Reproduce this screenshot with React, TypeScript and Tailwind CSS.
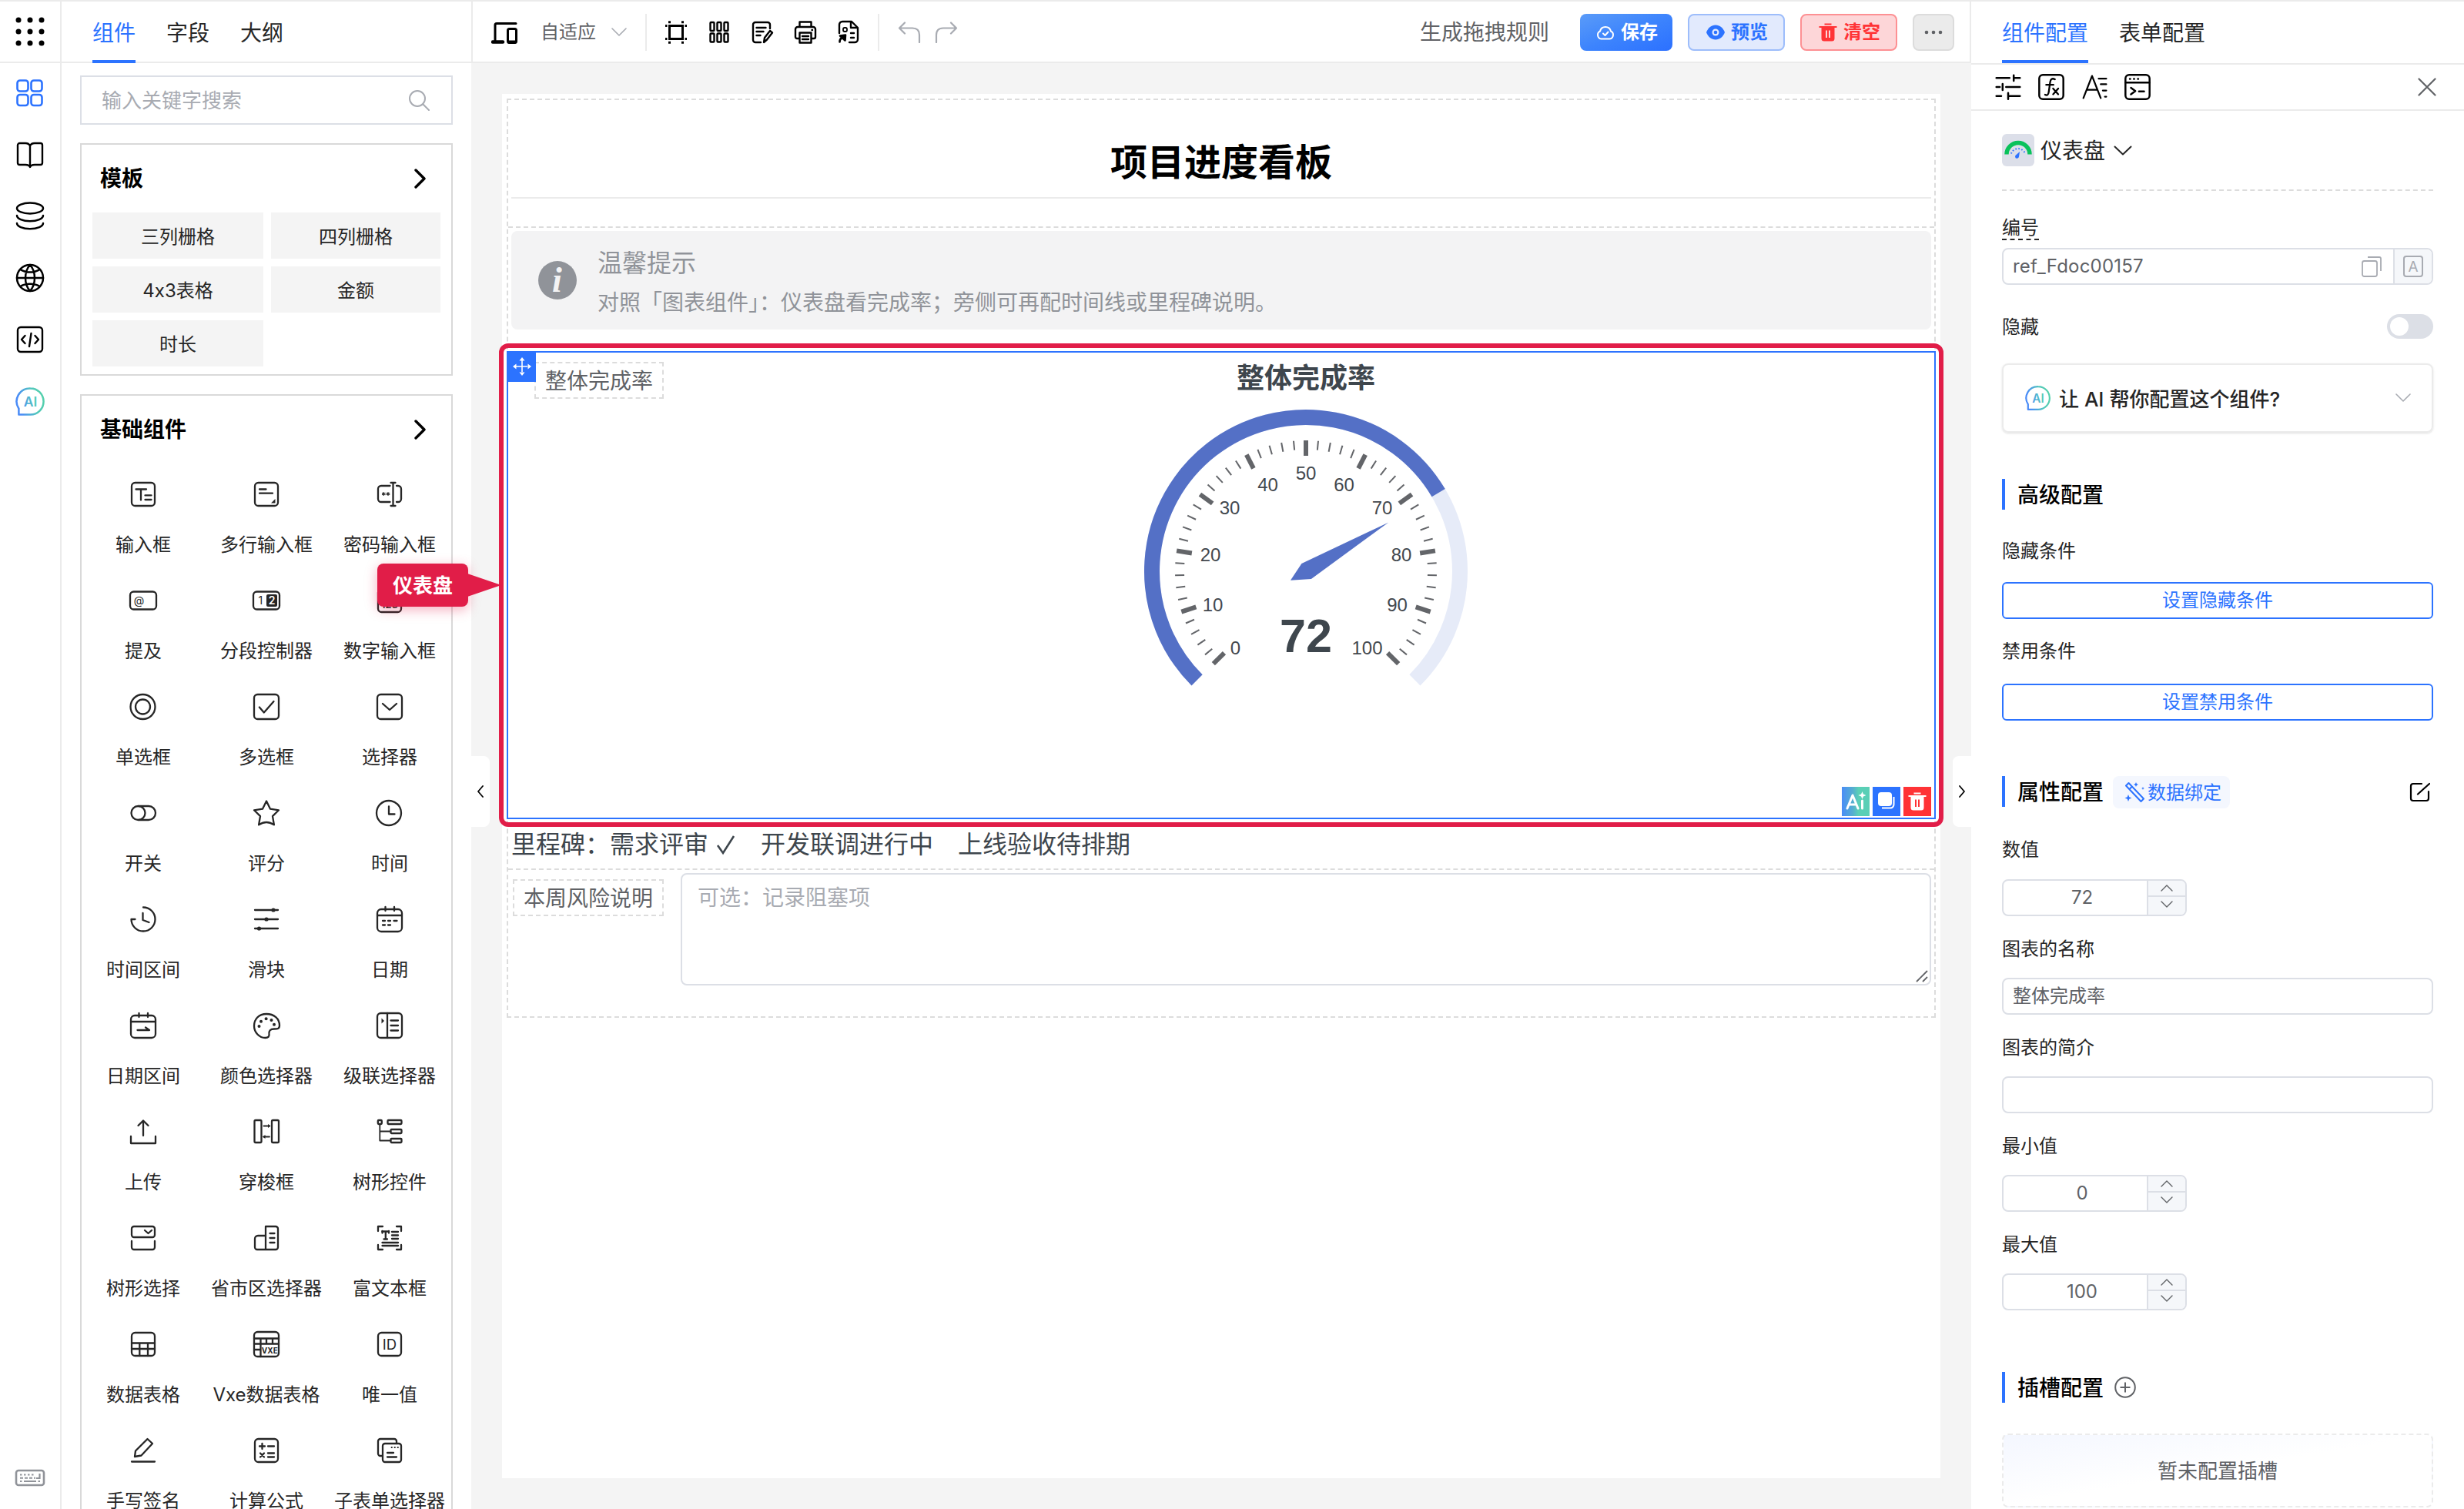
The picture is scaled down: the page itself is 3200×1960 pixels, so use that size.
import type { ReactNode } from 'react';
import clsx from 'clsx';

type Glyph = { label: string; icon: ReactNode };

const box = <rect x="5" y="5" width="30" height="30" rx="4.5" />;
const wideBox = <rect x="4" y="4" width="32" height="32" rx="4.5" />;
const calendar = (
  <>
    <rect x="4" y="7" width="32" height="29" rx="5" />
    <path d="M4 15h32M14.5 4v5M26 4v5" />
  </>
);

const basics: Glyph[] = [
  {
    label: '输入框',
    icon: (
      <>
        {box}
        <path d="M10.5 13.5h13.5M17 13.5v14M22.5 21.4h8M22.5 27h8" />
      </>
    ),
  },
  {
    label: '多行输入框',
    icon: (
      <>
        {box}
        <path d="M11 13.5h8.5M11 18.7h17" />
        <path d="M31.5 26v5.5H26z" fill="currentColor" stroke="none" />
      </>
    ),
  },
  {
    label: '密码输入框',
    icon: (
      <>
        <path d="M20.5 9H9a4 4 0 0 0-4 4v13a4 4 0 0 0 4 4h11.5M29 9h2a4 4 0 0 1 4 4v13a4 4 0 0 1-4 4h-2M24.5 5v30M21.5 5h6M21.5 35h6" />
        <path d="M12.3 17.5v4M10.5 18.5l3.6 2M14.1 18.5l-3.6 2M18 17.5v4M16.2 18.5l3.6 2M19.8 18.5l-3.6 2" strokeWidth="1.2" />
      </>
    ),
  },
  {
    label: '提及',
    icon: (
      <>
        <rect x="3" y="8.5" width="34" height="23" rx="4.5" />
        <text x="14.5" y="24.5" fontSize="14" textAnchor="middle" fill="currentColor" stroke="none">@</text>
      </>
    ),
  },
  {
    label: '分段控制器',
    icon: (
      <>
        <rect x="3" y="8.5" width="34" height="23" rx="4.5" />
        <rect x="20" y="12" width="14" height="16" rx="2" fill="currentColor" stroke="none" />
        <text x="12.3" y="25.3" fontSize="14" textAnchor="middle" fill="currentColor" stroke="none">1</text>
        <text x="27" y="25" fontSize="14" fontWeight="600" textAnchor="middle" fill="#fff" stroke="none">2</text>
      </>
    ),
  },
  {
    label: '数字输入框',
    icon: (
      <>
        {box}
        <text x="20" y="30" fontSize="13" fontWeight="600" textAnchor="middle" fill="currentColor" stroke="none">123</text>
      </>
    ),
  },
  {
    label: '单选框',
    icon: (
      <>
        <circle cx="19.5" cy="20" r="16" />
        <circle cx="19.5" cy="20" r="9.5" />
      </>
    ),
  },
  {
    label: '多选框',
    icon: (
      <>
        {wideBox}
        <path d="M10.8 20.5l6 7L29.5 13" />
      </>
    ),
  },
  {
    label: '选择器',
    icon: (
      <>
        {wideBox}
        <path d="M11 16l9 8 9-8" />
      </>
    ),
  },
  {
    label: '开关',
    icon: (
      <>
        <path d="M14 11h13a9 9 0 0 1 0 18H14" />
        <circle cx="13.5" cy="20" r="9" />
      </>
    ),
  },
  {
    label: '评分',
    icon: <path d="M20 4.5l5 10.2 11 1.6-8 7.8 1.9 11.2c-3-1.8-6-3.3-9.9-3.3s-6.9 1.5-9.9 3.3L12 24.1l-8-7.8 11-1.6z" />,
  },
  {
    label: '时间',
    icon: (
      <>
        <circle cx="19" cy="20" r="16" />
        <path d="M19 11.5v10h7.500" />
      </>
    ),
  },
  { label: '时间区间', icon: <path d="M20 4.5A15.5 15.5 0 1 1 4.5 20h5M19.5 12v9l8 3" /> },
  {
    label: '滑块',
    icon: (
      <>
        <path d="M5 8h30M5 20h30M5 32h30" />
        <g fill="currentColor" stroke="none">
          <circle cx="29" cy="8" r="2.6" />
          <circle cx="20" cy="20" r="2.6" />
          <circle cx="10.5" cy="32" r="2.6" />
        </g>
      </>
    ),
  },
  {
    label: '日期',
    icon: (
      <>
        {calendar}
        <path d="M11 22h3M18 22h3M25.5 22h4M11 27.5h3M18 27.5h3" />
      </>
    ),
  },
  {
    label: '日期区间',
    icon: (
      <>
        {calendar}
        <path d="M12.5 26h15.5l-5-3.5" />
      </>
    ),
  },
  {
    label: '颜色选择器',
    icon: (
      <>
        <path d="M37 20C37 11 30 5 20 5S4 12 4 20.5 11 36 18.5 36c4 0 5.5-2 5-5-.5-4 1.5-6.5 6.5-6.5 4 0 7 0 7-4.5z" />
        <g fill="currentColor" stroke="none">
          <circle cx="10.5" cy="21" r="2" />
          <circle cx="13" cy="14.7" r="2" />
          <circle cx="19.6" cy="11.3" r="2" />
          <circle cx="26.5" cy="13" r="2" />
          <circle cx="30" cy="18.8" r="2" />
        </g>
      </>
    ),
  },
  {
    label: '级联选择器',
    icon: (
      <>
        {wideBox}
        <path d="M17 4v32M21.5 13.5H31M21.5 20H31M21.5 26.5H31" />
        <path d="M9.5 10.5l3.5 3.5-3.5 3.5z" fill="currentColor" stroke="none" />
      </>
    ),
  },
  { label: '上传', icon: <path d="M4 26v9h32v-9M20 25V6M13.5 12L20 5.500l6.500 6.500" /> },
  {
    label: '穿梭框',
    icon: (
      <>
        <rect x="4.5" y="5" width="9" height="29" rx="1.5" />
        <rect x="27" y="5" width="9" height="29" rx="1.5" />
        <path d="M16.5 12.5H24M16.5 26.5H24" strokeWidth="1.8" />
        <path d="M22 10l3.5 2.5L22 15zM18.5 24L15 26.5l3.5 2.5z" fill="currentColor" stroke="none" />
      </>
    ),
  },
  {
    label: '树形控件',
    icon: (
      <>
        <rect x="4.8" y="5" width="5" height="5" rx="1" />
        <rect x="17.5" y="5" width="18" height="5" rx="1" />
        <rect x="21.5" y="17" width="14" height="5" rx="1" />
        <rect x="21.5" y="29" width="14" height="5" rx="1" />
        <path d="M7.3 10v21.5h14M7.3 19.5h14" strokeWidth="1.8" />
      </>
    ),
  },
  {
    label: '树形选择',
    icon: (
      <>
        <rect x="5" y="5" width="30" height="14" rx="3" />
        <path d="M22 10l4.5 4 4.5-4M5 24v8a3 3 0 0 0 3 3h24a3 3 0 0 0 3-3v-8" />
      </>
    ),
  },
  {
    label: '省市区选择器',
    icon: <path d="M19 5h13a3 3 0 0 1 3 3v24a3 3 0 0 1-3 3H19zM19 17H9a4 4 0 0 0-4 4v11a3 3 0 0 0 3 3h11M24.5 14h6M24.5 20h6M24.5 26h6" />,
  },
  {
    label: '富文本框',
    icon: (
      <>
        <path d="M5 11V5h6M29 5h6v6M5 29v6h6M29 35h6v-6M10.5 11.5h8.5M14.8 11.5V21M12.5 21.5h4.5M23 12h8M23 16.5h8M23 21h8M10.5 26h20.5M10.5 30h20.5" />
        <path d="M10.5 11v2.500M19 11v2.500" />
      </>
    ),
  },
  {
    label: '数据表格',
    icon: (
      <>
        {box}
        <path d="M5 18.5h30M5 26h30M15.3 18.5V35M26 18.5V35" />
      </>
    ),
  },
  {
    label: 'Vxe数据表格',
    icon: (
      <>
        {wideBox}
        <path d="M4 12.5h32M4 19.5h32M4 27h8.5M12.5 12.5V36M20 12.5v7M28 12.5v7" />
        <text x="24.3" y="31.5" fontSize="10" fontWeight="700" textAnchor="middle" fill="currentColor" stroke="none">VXE</text>
      </>
    ),
  },
  {
    label: '唯一值',
    icon: (
      <>
        {box}
        <text x="20" y="26.7" fontSize="18.5" textAnchor="middle" fill="currentColor" stroke="none">ID</text>
      </>
    ),
  },
  { label: '手写签名', icon: <path d="M5 34.5h30M9 28l1-7.5L25.5 5l6.5 6-14.5 15.5z" /> },
  {
    label: '计算公式',
    icon: (
      <>
        {box}
        <path d="M11 14.5h7M14.5 11v7M22 14.5h8M12 23.5l5 5M17 23.5l-5 5M22 23.5h8M22 28.5h8" />
      </>
    ),
  },
  {
    label: '子表单选择器',
    icon: (
      <>
        <path d="M11 27H8a3 3 0 0 1-3-3V8a3 3 0 0 1 3-3h18a3 3 0 0 1 3 3v3" />
        <rect x="11" y="11" width="24" height="24" rx="3" />
        <path d="M17 23h8M17 28.5h12" />
        <path d="M22.500 16h.5M26.500 16h.5M30.500 16h.5" strokeWidth="1.800" />
      </>
    ),
  },
];

const templates = ['三列栅格', '四列栅格', '4x3表格', '金额', '时长'];

function Svg({ size, className, children, sw = 2.3 }: { size: number; className?: string; children: ReactNode; sw?: number }) {
  return (
    <svg
      width={size}
      height={size}
      viewBox="0 0 40 40"
      className={clsx('block shrink-0', className)}
      fill="none"
      stroke="currentColor"
      strokeWidth={sw}
      strokeLinecap="round"
      strokeLinejoin="round"
    >
      {children}
    </svg>
  );
}

function Chevron({ d, w, h, sw = 2, className }: { d: string; w: number; h: number; sw?: number; className?: string }) {
  return (
    <svg width={w} height={h} className={clsx('block shrink-0', className)} fill="none" stroke="currentColor" strokeWidth={sw} strokeLinecap="round" strokeLinejoin="round">
      <path d={d} />
    </svg>
  );
}

function AiBubble({ size, id }: { size: number; id: string }) {
  return (
    <svg width={size} height={size} viewBox="0 0 40 40" className="block shrink-0">
      <defs>
        <linearGradient id={id} gradientUnits="userSpaceOnUse" x1="2" y1="24" x2="38" y2="16">
          <stop offset="0.1" stopColor="#4a8cf7" />
          <stop offset="0.65" stopColor="#52c8bb" />
          <stop offset="1" stopColor="#55d0ab" />
        </linearGradient>
      </defs>
      <path d="M20 2.5a17.5 17.5 0 1 1 0 35H4.5V29.5A17.5 17.5 0 0 1 20 2.5z" fill="none" stroke={`url(#${id})`} strokeWidth="2.6" strokeLinejoin="round" />
      <text x="20" y="26.500" fontSize="18" fontWeight="600" textAnchor="middle" fill={`url(#${id})`}>AI</text>
    </svg>
  );
}

function Rail() {
  return (
    <nav className="flex w-20 shrink-0 flex-col border-r-2 border-[#ebebeb] text-black">
      <div className="flex h-20 shrink-0 items-center justify-center border-b-2 border-[#ebebeb]">
        <svg width="38" height="38" className="block">
          {[4, 19, 34].map((y) => [4, 19, 34].map((x) => <circle key={`${x}-${y}`} cx={x} cy={y} r="3.5" />))}
        </svg>
      </div>
      <div className="-mt-px flex h-20 items-center justify-center text-[#2c73ff]">
        <Svg size={40} sw={2.6}>
          <rect x="3.5" y="3.5" width="14" height="14" rx="3.5" />
          <rect x="21.5" y="3.5" width="14" height="14" rx="3.5" />
          <rect x="3.5" y="22" width="14" height="14" rx="3.5" />
          <rect x="21.5" y="22" width="14" height="14" rx="3.5" />
        </Svg>
      </div>
      <div className="flex h-20 items-center justify-center">
        <Svg size={40} sw={2.4}>
          <path d="M20 8.5c-1-2.5-3-3.5-6-3.5H6.5A2.5 2.5 0 0 0 4 7.5v23A2.5 2.5 0 0 0 6.5 33H14c3 0 5 .5 6 3 1-2.5 3-3 6-3h7.5a2.5 2.5 0 0 0 2.5-2.5v-23A2.5 2.5 0 0 0 33.5 5H26c-3 0-5 1-6 3.5zM20 8.5V35" />
        </Svg>
      </div>
      <div className="flex h-20 items-center justify-center">
        <Svg size={40} sw={2.5}>
          <ellipse cx="20" cy="9.5" rx="17" ry="7" />
          <path d="M3 19c0 4 7.5 7.2 17 7.2S37 23 37 19M3 29c0 4 7.5 7.2 17 7.2S37 33 37 29" />
        </Svg>
      </div>
      <div className="flex h-20 items-center justify-center">
        <Svg size={40} sw={2.5}>
          <circle cx="20" cy="20" r="17" />
          <path d="M3 20h34M20 3c-8 9-8 25 0 34M20 3c8 9 8 25 0 34M7.5 9c6 4.5 19 4.5 25 0M7.5 31c6-4.5 19-4.5 25 0" />
        </Svg>
      </div>
      <div className="flex h-20 items-center justify-center pb-px">
        <Svg size={40} sw={2.4}>
          <rect x="4" y="4" width="32" height="32" rx="4" />
          <path d="M13.5 15L9 20l4.5 5M26.5 15l4.5 5-4.5 5M21.5 12l-2.5 17" />
        </Svg>
      </div>
      <div className="flex h-20 items-center justify-center">
        <AiBubble size={39} id="ai-rail" />
      </div>
      <div className="mt-auto flex h-20 items-center justify-center text-[#909399]">
        <svg width="40" height="26" className="block" fill="none" stroke="currentColor" strokeWidth="2.6">
          <rect x="2" y="3" width="36" height="19" rx="3" />
          <path d="M7 8.500h19" strokeDasharray="2.5 2.500" strokeWidth="2" />
          <path d="M7 12.700h20" strokeDasharray="4 2" strokeWidth="2" />
          <path d="M32.500 7v6H28" strokeWidth="2.200" />
          <path d="M7 17h2.500M12 17h16M30.500 17H33" strokeWidth="2" />
        </svg>
      </div>
    </nav>
  );
}

function CardTitle({ title, className }: { title: string; className: string }) {
  return (
    <div className={clsx('flex items-center justify-between pr-8 pl-6 text-[28px] font-bold text-black', className)}>
      <span>{title}</span>
      <Chevron d="M2 2l11 11L2 24" w={16} h={26} sw={3.4} />
    </div>
  );
}

function Palette() {
  return (
    <aside className="flex w-[532px] shrink-0 flex-col overflow-hidden">
      <div className="flex h-20 shrink-0 gap-10 border-b-2 border-[#ebebeb] px-10 text-[28px] text-[#262626]">
        <div className="-mb-0.5 flex items-center border-b-4 border-[#2c73ff] pt-[5px] text-[#2c73ff]">组件</div>
        <div className="flex items-center pt-[3px]">字段</div>
        <div className="flex items-center pt-[3px]">大纲</div>
      </div>
      <div className="flex flex-col gap-6 px-6 pt-4">
        <div className="flex h-16 items-center justify-between border-2 border-[#dcdfe6] pr-7 pl-[26px] text-[26px] text-[#a8abb2]">
          <span>输入关键字搜索</span>
          <svg width="28" height="28" className="block" fill="none" stroke="currentColor" strokeWidth="2" strokeLinecap="round">
            <circle cx="12" cy="12" r="10" />
            <path d="M19.5 19.5L27 27" />
          </svg>
        </div>
        <section className="h-[302px] border-2 border-[#d9d9d9]">
          <CardTitle title="模板" className="h-[88px]" />
          <div className="grid grid-cols-[222px_220px] gap-[10px] pl-[14px]">
            {templates.map((name) => (
              <div key={name} className="flex h-[60px] items-center justify-center bg-[#f4f4f4] pt-[3px] text-2xl text-[#262626]">
                {name}
              </div>
            ))}
          </div>
        </section>
        <section className="border-2 border-[#d9d9d9]">
          <CardTitle title="基础组件" className="h-24 pb-2" />
          <div className="grid grid-cols-3">
            {basics.map((item) => (
              <div key={item.label} className="flex h-[138px] flex-col items-center pt-3 text-[#262626]">
                <Svg size={40}>{item.icon}</Svg>
                <div className="mt-[30px] text-2xl whitespace-nowrap">{item.label}</div>
              </div>
            ))}
          </div>
        </section>
      </div>
    </aside>
  );
}

function Tool({ children }: { children: ReactNode }) {
  return (
    <div className="flex w-14 justify-center text-black">
      <svg width="32" height="32" className="block" fill="none" stroke="currentColor" strokeWidth="2.6" strokeLinecap="round" strokeLinejoin="round">
        {children}
      </svg>
    </div>
  );
}

function Toolbar() {
  return (
    <header className="flex h-20 shrink-0 items-center border-x-2 border-b-2 border-[#ebebeb] bg-white pt-0.5 pr-5 pl-6 text-[#606266]">
      <svg width="34" height="30" className="mt-0.5 block text-black" fill="none" stroke="currentColor" strokeWidth="3">
        <path d="M5 25V4.5A2 2 0 0 1 7 2.5h25" strokeLinecap="round" />
        <path d="M2 26.5h13" strokeWidth="4.5" strokeLinecap="round" />
        <rect x="21.5" y="9.5" width="11" height="18" rx="2" />
        <path d="M22 26.5h10" strokeWidth="4" />
      </svg>
      <span className="ml-[30px] text-2xl">自适应</span>
      <Chevron d="M1 1l9 9 9-9" w={20} h={12} sw={1.6} className="ml-[20px] text-[#a8abb2]" />
      <i className="mr-[10px] ml-6 h-12 w-0.5 bg-[#ebebeb]" />
      <Tool>
        <rect x="7.5" y="7.5" width="17" height="17" strokeWidth="3" strokeLinejoin="miter" />
        <path d="M7.5 1.200v3M24.5 1.200v3M7.5 27.800v3M24.5 27.800v3M2 7.500h2.500M27.500 7.500H30M2 24.500h2.500M27.500 24.500H30" strokeWidth="3" strokeLinecap="butt" />
      </Tool>
      <Tool>
        {[4.5, 13.5, 22.5].map((x) => [3, 17.5].map((y) => <rect key={`${x}-${y}`} x={x} y={y} width="5" height="11" rx="1" strokeWidth="2.4" />))}
      </Tool>
      <Tool>
        <path d="M26 11V6a3 3 0 0 0-3-3H7a3 3 0 0 0-3 3v20a3 3 0 0 0 3 3h7M8.5 10h12M8.5 15h9M8.5 20h5M18 29l1-6 7-9 3 2.5-7 9z" strokeWidth="2.4" />
      </Tool>
      <Tool>
        <path d="M8.5 9V2.5h15V9M8.5 24H5a2 2 0 0 1-2-2V12a3 3 0 0 1 3-3h20a3 3 0 0 1 3 3v10a2 2 0 0 1-2 2h-3.5M8.5 16.5h15v13h-15zM12 21h8M12 25h8M24.5 13h.5" strokeWidth="2.4" />
      </Tool>
      <Tool>
        <path d="M4 17V6a4 4 0 0 1 4-4h12l8 8v15a4 4 0 0 1-4 4h-7M19 2.5V10h8.5M19 17h4M19 23h4" strokeWidth="2.4" />
        <rect x="9" y="10" width="5" height="5" rx="2" strokeWidth="1.8" />
        <path d="M4.5 28.5c0-4 2-6 5.5-7.5M5 20.5l7-1-.5 7z" fill="currentColor" />
      </Tool>
      <i className="mr-6 ml-[10px] h-12 w-0.5 bg-[#ebebeb]" />
      <Chevron d="M9 1.5L2 8.5l7 7M2 8.5h17c6 0 9 3 9 9V27" w={30} h={28} sw={2.2} className="text-[#a8abb2]" />
      <Chevron d="M21 1.5l7 7-7 7M28 8.5H11c-6 0-9 3-9 9V27" w={30} h={28} sw={2.2} className="ml-[18px] text-[#a8abb2]" />

      <span className="mr-10 ml-auto text-[28px]">生成拖拽规则</span>
      <div className="flex gap-5 text-2xl font-bold">
        <button className="flex h-12 w-[120px] items-center justify-center gap-2 rounded-lg bg-linear-to-br from-[#5a9bf8] via-[#3d84fd] to-[#2c70ff] pl-0.5 text-white">
          <svg width="24" height="24" className="block" fill="none" stroke="currentColor" strokeWidth="2" strokeLinecap="round" strokeLinejoin="round">
            <path d="M6.5 20.5a5.300 5.300 0 0 1-1.500-10 7.200 7.200 0 0 1 14 0 5.300 5.300 0 0 1-1.500 10zM9 13.500l2.5 2.5L15.500 11.500" />
          </svg>
          保存
        </button>
        <button className="flex h-12 w-[126px] items-center justify-center gap-2 rounded-lg border-2 border-[#9dbdfb] bg-[#e2eafd] pl-0.5 text-[#2c73ff]">
          <svg width="24" height="24" className="block">
            <path d="M12 2.5C17.5 2.5 21.5 6 24 12c-2.5 6-6.5 9.5-12 9.5S2.5 18 0 12C2.5 6 6.5 2.5 12 2.5z" fill="currentColor" />
            <circle cx="12" cy="12" r="4.500" fill="#e2eafd" />
            <circle cx="12" cy="12" r="2.300" fill="currentColor" />
          </svg>
          预览
        </button>
        <button className="flex h-12 w-[126px] items-center justify-center gap-2 rounded-lg border-2 border-[#fd9093] bg-[#fdd6d8] pl-0.5 text-[#ff3336]">
          <TrashIcon slot="#fdd6d8" />
          清空
        </button>
        <button className="flex h-12 w-[54px] items-center justify-center rounded-lg border-2 border-[#dcdcdc] bg-[#ebebeb] text-[#606266]">
          <svg width="26" height="6" className="block" fill="currentColor">
            <circle cx="4" cy="3" r="2.3" />
            <circle cx="13" cy="3" r="2.3" />
            <circle cx="22" cy="3" r="2.3" />
          </svg>
        </button>
      </div>
    </header>
  );
}

function TrashIcon({ slot }: { slot: string }) {
  return (
    <svg width="24" height="24" className="block" fill="currentColor">
      <path d="M7.500 .5h9v2h-9zM.500 4h23v2h-3V20a3.5 3.5 0 0 1-3.5 3.5H7A3.5 3.5 0 0 1 3.5 20V6h-3z" />
      <path d="M9 9.5h2V19H9zM13 9.5h2V19h-2z" fill={slot} />
    </svg>
  );
}

const polar = (value: number, r: number) => {
  const a = ((225 - value * 2.7) * Math.PI) / 180;
  return { x: r * Math.cos(a), y: -r * Math.sin(a) };
};

const arc = (from: number, to: number, r: number) => {
  const s = polar(from, r);
  const e = polar(to, r);
  return `M${s.x} ${s.y}A${r} ${r} 0 ${(to - from) * 2.7 > 180 ? 1 : 0} 1 ${e.x} ${e.y}`;
};

// axis labels, offset from the dial centre
const dialLabels = [
  { v: 0, x: -91.5, y: 99.5 },
  { v: 10, x: -121, y: 43.5 },
  { v: 20, x: -124, y: -21.5 },
  { v: 30, x: -99, y: -82 },
  { v: 40, x: -49.5, y: -112 },
  { v: 50, x: 0, y: -127.5 },
  { v: 60, x: 49.5, y: -112 },
  { v: 70, x: 99, y: -82 },
  { v: 80, x: 124, y: -21.5 },
  { v: 90, x: 118.5, y: 43.5 },
  { v: 100, x: 79.5, y: 99.5 },
];

function Gauge({ value }: { value: number }) {
  return (
    <svg width="1852" height="604" viewBox="-1036 -284 1852 604" className="block font-['Liberation_Sans','Noto_Sans_CJK_SC',sans-serif]">
      <text x="0" y="-238" fontSize="36" fontWeight="700" textAnchor="middle" fill="#3e464d">
        整体完成率
      </text>
      <path d={arc(0, 100, 200)} fill="none" stroke="#e6ebf8" strokeWidth="20" />
      <path d={arc(0, value, 200)} fill="none" stroke="#5470c6" strokeWidth="20" />
      {Array.from({ length: 51 }, (_, i) => {
        const major = i % 5 === 0;
        const a = polar(i * 2, 170);
        const b = polar(i * 2, major ? 150 : 158);
        return <line key={i} x1={a.x} y1={a.y} x2={b.x} y2={b.y} stroke="#636569" strokeWidth={major ? 6 : 2} />;
      })}
      {dialLabels.map((l) => (
        <text key={l.v} x={l.x} y={l.y + 8} fontSize="24" textAnchor="middle" fill="#43484e">
          {l.v}
        </text>
      ))}
      <path d="M107-63.3L-5.6-10-20 11.7 6.9 10z" fill="#5470c6" />
      <text x="0" y="105" fontSize="61" fontWeight="700" textAnchor="middle" fill="#3e464d">
        {value}
      </text>
    </svg>
  );
}

function SelectedGauge() {
  return (
    <div className="relative -mx-0.5 mt-7 h-[608px] border-2 border-[#2c73ff] bg-white">
      <Gauge value={72} />
      <div className="absolute top-3 left-[34px] flex h-12 w-[168px] items-center justify-center border-2 border-dashed border-[#dcdcdc] pt-px text-[28px] text-[#606266]">
        整体完成率
      </div>
      <div className="absolute -top-0.5 -left-0.5 flex h-10 w-[38px] items-center justify-center bg-[#2c73ff] pl-0.5">
        <svg width="24" height="24" className="block" fill="#fff">
          <path d="M11.2 4h1.6v7.2H20v1.6h-7.2V20h-1.6v-7.2H4v-1.6h7.2zM12 0l3.5 4.5h-7zM12 24l3.5-4.5h-7zM0 12l4.5-3.5v7zM24 12l-4.5-3.5v7z" />
        </svg>
      </div>
      <div className="absolute right-1 bottom-0.5 flex gap-1 text-white">
        <div className="flex h-[38px] w-9 items-center justify-center bg-linear-to-r from-[#4a8cf7] via-[#56aecf] via-40% to-[#5acfb6] to-60%">
          <svg width="26" height="26" className="block" fill="none" stroke="currentColor" strokeWidth="3" strokeLinecap="round" strokeLinejoin="round">
            <path d="M2 22L9 5l7 17M5 17h8M21.5 12v10" />
            <path d="M21.5 0l1.4 3.6L26.5 5l-3.6 1.4L21.5 10l-1.4-3.6L16.5 5l3.6-1.400z" fill="currentColor" stroke="none" />
          </svg>
        </div>
        <div className="flex h-[38px] w-9 items-center justify-center bg-[#2c73ff]">
          <svg width="24" height="24" className="block">
            <rect x="1" y="0" width="18" height="18" rx="4" fill="currentColor" />
            <path d="M6 20.5h11a4.5 4.5 0 0 0 4.5-4.5V6" fill="none" stroke="currentColor" strokeWidth="2" />
          </svg>
        </div>
        <div className="flex h-[38px] w-9 items-center justify-center bg-[#ff3336]">
          <TrashIcon slot="#ff3336" />
        </div>
      </div>

      {/* callout frame and tag */}
      <div className="absolute -top-3 -right-3 -bottom-3 -left-3 rounded-xl border-[6px] border-[#e11d48]" />
      <div className="absolute top-[274px] left-[-170px] flex items-center">
        <div className="flex h-14 w-[118px] items-center justify-center rounded-lg bg-[#e11d48] text-[26px] font-bold text-white shadow-[0_4px_16px_rgba(225,29,72,0.35)]">
          仪表盘
        </div>
        <svg width="44" height="30" className="-ml-px block">
          <path d="M0 0l44 15L0 30z" fill="#e11d48" />
        </svg>
      </div>
    </div>
  );
}

function Canvas() {
  return (
    <main className="relative flex min-h-0 flex-1 flex-col bg-[#f4f4f4] p-10">
      <div className="flex-1 bg-white p-1.5">
        <div className="h-[1194px] border-2 border-dashed border-[#dcdcdc]">
          <div className="h-[166px] border-b-2 border-dashed border-[#dcdcdc] px-1">
            <div className="flex h-32 items-center justify-center border-b-2 border-[#ebebeb] pt-9 text-5xl font-bold text-black">
              项目进度看板
            </div>
          </div>
          <div className="mx-1 mt-1 flex h-32 items-center rounded-lg bg-[#f3f3f4] pl-[35px] text-[#909399]">
            <svg width="50" height="50" className="block">
              <circle cx="25" cy="25" r="25" fill="currentColor" />
              <text x="24.500" y="40" fontSize="46" fontWeight="700" fontStyle="italic" textAnchor="middle" fill="#f3f3f4" className="font-['Liberation_Serif',serif]">i</text>
            </svg>
            <div className="ml-[27px] flex flex-col gap-2 pt-1">
              <div className="text-[32px] leading-[46px]">温馨提示</div>
              <div className="text-[28px] leading-10">对照「图表组件」：仪表盘看完成率；旁侧可再配时间线或里程碑说明。</div>
            </div>
          </div>
          <SelectedGauge />
          <div className="flex h-16 items-center pt-px pl-1 text-[32px] text-[#3e464d]">
            <span>里程碑：需求评审</span>
            <svg width="26" height="28" className="ml-[10px] block" fill="none" stroke="currentColor" strokeWidth="2.6">
              <path d="M2 15l7 10L23 3" />
            </svg>
            <span className="ml-8">开发联调进行中</span>
            <span className="ml-8">上线验收待排期</span>
          </div>
          <div className="flex items-start border-t-2 border-dashed border-[#dcdcdc] pt-1 pr-1 pl-1.5">
            <div className="mt-2 flex h-12 w-[196px] items-center justify-center border-2 border-dashed border-[#dcdcdc] pt-px text-[28px] text-[#606266]">
              本周风险说明
            </div>
            <div className="relative ml-[22px] h-[146px] flex-1 rounded-lg border-2 border-[#dcdfe6] px-5 pt-[9px] text-[28px] leading-[42px] text-[#a8abb2]">
              可选：记录阻塞项
              <svg width="18" height="18" className="absolute right-px bottom-px block" stroke="#606266" strokeWidth="1.8">
                <path d="M2 16L16 2M10 16l6-6" />
              </svg>
            </div>
          </div>
        </div>
      </div>
      <button className="absolute top-[900px] left-0 flex h-[92px] w-6 items-center justify-center rounded-r-lg bg-white text-black">
        <Chevron d="M8 1L2 8l6 7" w={10} h={16} sw={1.8} />
      </button>
      <button className="absolute top-[900px] right-0 flex h-[92px] w-6 items-center justify-center rounded-l-lg bg-white text-black">
        <Chevron d="M2 1l6 7-6 7" w={10} h={16} sw={1.8} />
      </button>
    </main>
  );
}

function Section({ title, children, className }: { title: string; children?: ReactNode; className: string }) {
  return (
    <div className={clsx('flex h-10 items-center', className)}>
      <i className="h-10 w-1 bg-[#2c73ff]" />
      <span className="ml-4 pt-px text-[28px] font-medium text-black">{title}</span>
      {children}
    </div>
  );
}

function FieldLabel({ children, className = 'h-20 pt-[5px]' }: { children: ReactNode; className?: string }) {
  return <div className={clsx('flex items-center text-2xl text-[#262626]', className)}>{children}</div>;
}

function NumberInput({ value }: { value: number }) {
  return (
    <div className="flex h-12 w-60 overflow-hidden rounded-lg border-2 border-[#dcdfe6] text-2xl text-[#606266]">
      <div className="flex flex-1 items-center justify-center pl-[18px]">{value}</div>
      <div className="flex w-[50px] flex-col border-l-2 border-[#dcdfe6] bg-[#f5f7fa]">
        <div className="flex flex-1 items-center justify-center border-b-2 border-[#dcdfe6]">
          <Chevron d="M1 8l7-7 7 7" w={16} h={9} sw={1.4} />
        </div>
        <div className="flex flex-1 items-center justify-center pb-1">
          <Chevron d="M1 1l7 7 7-7" w={16} h={9} sw={1.4} />
        </div>
      </div>
    </div>
  );
}

function CondButton({ children }: { children: ReactNode }) {
  return (
    <button className="flex h-12 w-full items-center justify-center rounded-md border-2 border-[#2c73ff] text-2xl text-[#2c73ff]">
      {children}
    </button>
  );
}

function Inspector() {
  return (
    <aside className="flex w-[640px] shrink-0 flex-col overflow-hidden">
      <div className="flex h-[82px] shrink-0 gap-10 border-b-2 border-[#ebebeb] px-10 text-[28px] text-[#262626]">
        <div className="flex items-center border-b-4 border-[#2c73ff] pt-[5px] text-[#2c73ff]">组件配置</div>
        <div className="flex items-center pt-px">表单配置</div>
      </div>
      <div className="flex h-[60px] shrink-0 items-center border-b-2 border-[#ebebeb] pr-9 pl-[30px] text-black">
        <Svg size={36} sw={2.8}>
          <path d="M3 7h19M28 3v8M28 7h9M3 20h5M12 15.5v9M17 20h20M3 33h7M20 28.5v9M20 33h17" />
        </Svg>
        <Svg size={38} sw={2.6} className="ml-[19px]">
          <rect x="3.5" y="3.5" width="33" height="33" rx="5" />
          <path d="M25 9.5c-4-2-6 0-6.5 3.5L16.500 27c-.5 3.5-2 5-5 3.5M13 17h10M22.500 22l7 8M29.500 22l-7 8" strokeWidth="2.4" />
        </Svg>
        <Svg size={36} sw={2.5} className="ml-5">
          <path d="M3 36L15.5 4 28 36M8 24h15M25 8h11M28 16h8M31 25h5M34 34h2" />
        </Svg>
        <Svg size={38} sw={2.6} className="ml-[18px]">
          <rect x="3.5" y="3.5" width="33" height="33" rx="5" />
          <path d="M3.5 14h33M11 21l6 4.5-6 4.5M22 26h7M9.5 9h.5M15 9h.5M20.5 9h.5" />
        </Svg>
        <Chevron d="M1.500 1.500l21 21M22.500 1.500l-21 21" w={24} h={24} sw={2.2} className="ml-auto text-[#606266]" />
      </div>

      <div className="flex flex-col px-10 pt-[30px]">
        <div className="flex h-[42px] items-center text-[28px] text-[#262626]">
          <svg width="42" height="42" className="block rounded-md bg-[#dcdfe9]" fill="none">
            <path d="M6 26.5a15 15 0 0 1 30 0" stroke="#0ac25b" strokeWidth="5.5" />
            <path d="M12 25.5a9.5 9.5 0 0 1 18 0" stroke="#2c73ff" strokeWidth="2" strokeDasharray="1.5 2.5" />
            <path d="M23 23l-1 6.5a2.5 2.5 0 1 1-3.5-2.5z" fill="#2c73ff" />
          </svg>
          <span className="ml-2 pt-0.5">仪表盘</span>
          <Chevron d="M1.500 1.500L12 11.500l10.500-10" w={24} h={14} sw={2} className="mt-0.5 ml-[11px]" />
        </div>
        <div className="mt-[30px] border-t-2 border-dashed border-[#dcdcdc]" />

        <div className="mt-[34px] flex h-[30px] w-12 items-center border-b-2 border-dashed border-[#262626] text-2xl text-[#262626]">编号</div>
        <div className="mt-[10px] flex h-12 items-stretch overflow-hidden rounded-lg border-2 border-[#dcdfe6] text-2xl text-[#606266]">
          <span className="flex items-center pl-3 tracking-[0.2px]">ref_Fdoc00157</span>
          <svg width="27" height="28" className="mr-[14px] ml-auto block self-center text-[#a8abb2]" fill="none" stroke="currentColor" strokeWidth="1.8">
            <rect x="1" y="7" width="19" height="20" rx="2.5" />
            <path d="M8 2h15a2 2 0 0 1 2 2v16" />
          </svg>
          <div className="flex w-[50px] items-center justify-center border-l-2 border-[#dcdfe6] bg-[#f5f7fa] text-[#a8abb2]">
            <svg width="26" height="28" className="block">
              <rect x="1" y="1" width="24" height="26" rx="3" fill="none" stroke="currentColor" strokeWidth="2" />
              <text x="13" y="21" fontSize="19" textAnchor="middle" fill="currentColor">A</text>
            </svg>
          </div>
        </div>

        <div className="mt-[38px] flex h-8 items-center justify-between text-2xl text-[#262626]">
          <span className="pt-0.5">隐藏</span>
          <div className="flex h-8 w-[60px] items-center rounded-full bg-[#dcdfe6] pl-1">
            <i className="size-6 rounded-full bg-white" />
          </div>
        </div>

        <div className="mt-8 flex h-[90px] items-center rounded-lg border-2 border-[#ebebeb] pr-[27px] pl-7 text-[26px] font-medium text-[#262626] shadow-sm">
          <AiBubble size={34} id="ai-card" />
          <span className="ml-[10px] pt-0.5">让 AI 帮你配置这个组件?</span>
          <Chevron d="M1 1l9 9 9-9" w={20} h={12} sw={1.6} className="ml-auto text-[#a8abb2]" />
        </div>

        <Section title="高级配置" className="mt-[60px]" />
        <FieldLabel className="h-[94px] pt-[14px]">隐藏条件</FieldLabel>
        <CondButton>设置隐藏条件</CondButton>
        <FieldLabel className="h-[84px]">禁用条件</FieldLabel>
        <CondButton>设置禁用条件</CondButton>

        <Section title="属性配置" className="mt-[72px]">
          <div className="mt-0.5 ml-3 flex h-[42px] w-[152px] items-center rounded-lg bg-[#f4f7fe] pl-[14px] text-2xl text-[#2c73ff]">
            <svg width="28" height="28" className="block" fill="none" stroke="currentColor" strokeWidth="2" strokeLinejoin="round">
              <path d="M3 5.5L6.5 2 26 22.5 22.5 26zM7.5 10L11 6.5" />
              <path d="M16 1l.9 2.1L19 4l-2.1.9L16 7l-.9-2.1L13 4l2.1-.9zM6 17l1.3 3.2L10.5 21.5l-3.2 1.3L6 26l-1.300-3.200L1.500 21.500l3.200-1.300zM25 7l.6 1.400L27 9l-1.400.6L25 11l-.6-1.400L23 9l1.400-.6z" fill="currentColor" stroke="none" />
            </svg>
            <span className="ml-[3px] pt-px">数据绑定</span>
          </div>
          <Chevron d="M16 2H5a3 3 0 0 0-3 3v16a3 3 0 0 0 3 3h17a3 3 0 0 0 3-3v-9M11 15.5L26 2" w={27} h={26} sw={2.2} className="mt-0.5 mr-1 ml-auto text-black" />
        </Section>
        <FieldLabel className="h-[94px] pt-[18px]">数值</FieldLabel>
        <NumberInput value={72} />
        <FieldLabel>图表的名称</FieldLabel>
        <div className="flex h-12 items-center rounded-lg border-2 border-[#dcdfe6] pl-3 text-2xl text-[#606266]">整体完成率</div>
        <FieldLabel>图表的简介</FieldLabel>
        <div className="h-12 rounded-lg border-2 border-[#dcdfe6]" />
        <FieldLabel>最小值</FieldLabel>
        <NumberInput value={0} />
        <FieldLabel>最大值</FieldLabel>
        <NumberInput value={100} />

        <Section title="插槽配置" className="mt-20">
          <svg width="28" height="28" className="ml-[14px] block" fill="none" stroke="#606266" strokeWidth="2">
            <circle cx="14" cy="14" r="12.8" />
            <path d="M14 7.5v13M7.5 14h13" />
          </svg>
        </Section>
        <div className="mt-10 flex h-24 items-center justify-center rounded-lg border-2 border-dashed border-[#ebebeb] bg-linear-to-br from-[#f4f7ff] to-white to-50% text-[26px] text-[#606266]">
          暂未配置插槽
        </div>
      </div>
    </aside>
  );
}

export default function App() {
  return (
    <div className="flex h-[1960px] w-[3200px] overflow-hidden border-t-2 border-[#ebebeb] bg-white font-['Inter','Noto_Sans_CJK_SC',sans-serif] [font-feature-settings:'calt'_0]">
      <Rail />
      <Palette />
      <div className="z-10 flex w-[1948px] shrink-0 flex-col">
        <Toolbar />
        <Canvas />
      </div>
      <Inspector />
    </div>
  );
}
